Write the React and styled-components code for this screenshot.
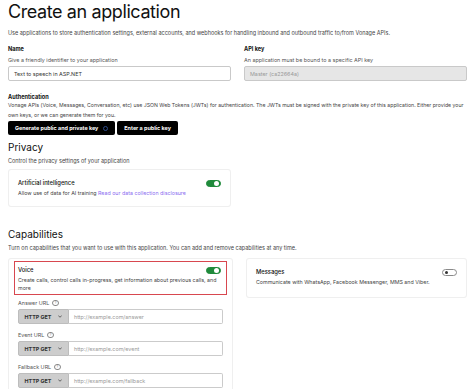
import styled, { createGlobalStyle } from 'styled-components';

const GlobalStyle = createGlobalStyle`
  html, body {
    margin: 0;
    padding: 0;
    background: #ffffff;
  }
  body {
    font-family: Inter, "Noto Sans", "Liberation Sans", sans-serif;
    color: #1a1a1a;
  }
`;

const Page = styled.div`
  width: 474px;
  height: 389px;
  overflow: hidden;
  padding: 0 7px 0 8px;
  box-sizing: border-box;
`;

const Title = styled.h1`
  margin: 1px 0 0;
  font-size: 18px;
  line-height: 22px;
  font-weight: 400;
  letter-spacing: -0.4px;
  color: #111;
`;

const Lead = styled.p`
  margin: ${(p) => p.$mt || 0}px 0 0;
  font-size: 5.5px;
  line-height: 8px;
  color: #444;
`;

const Columns = styled.div`
  display: grid;
  grid-template-columns: 1fr 1fr;
  column-gap: 13px;
  margin-top: ${(p) => p.$mt || 0}px;
  align-items: start;
`;

const Field = styled.div`
  display: flex;
  flex-direction: column;
`;

const Label = styled.div`
  font-size: 5.6px;
  line-height: 8px;
  font-weight: 700;
  color: #111;
`;

const Hint = styled.div`
  margin-top: 3px;
  font-size: 5.4px;
  line-height: 8px;
  color: #555;
`;

const TextInput = styled.div`
  margin-top: 2px;
  height: 15px;
  box-sizing: border-box;
  border: 1px solid #c9c9c9;
  border-radius: 2px;
  background: ${(p) => (p.$disabled ? '#e6e6e6' : '#fff')};
  color: ${(p) => (p.$disabled ? '#9a9a9a' : '#333')};
  font-size: 5.4px;
  display: flex;
  align-items: center;
  padding: 0 5px;
`;

const Section = styled.div`
  margin-top: ${(p) => p.$mt || 0}px;
`;

const Desc = styled.p`
  margin: 0;
  font-size: 5.2px;
  line-height: 9.5px;
  color: #444;
`;

const ButtonRow = styled.div`
  display: flex;
  gap: 2px;
  margin-top: 1px;
`;

const DarkButton = styled.button`
  height: 14px;
  padding: 0 ${(p) => p.$px || 6}px;
  background: #000;
  color: #fff;
  border: none;
  border-radius: 2px;
  font-family: inherit;
  font-size: 5.4px;
  font-weight: 700;
  display: flex;
  align-items: center;
  gap: 5px;
`;

const InfoDot = styled.span`
  width: 5px;
  height: 5px;
  border-radius: 50%;
  border: 1px solid #2d4c8c;
  box-sizing: border-box;
`;

const Heading = styled.h2`
  margin: ${(p) => p.$mt || 0}px 0 0;
  font-size: 10px;
  line-height: 12px;
  font-weight: 400;
  color: #111;
`;

const Card = styled.div`
  box-sizing: border-box;
  border: 1px solid #efefef;
  border-radius: 3px;
  background: #fff;
  padding: ${(p) => p.$pad || '8px 9px'};
  box-shadow: 0 0 1px rgba(0, 0, 0, 0.03);
`;

const CardHead = styled.div`
  display: flex;
  align-items: center;
  justify-content: space-between;
`;

const CardTitle = styled.div`
  font-size: 5.8px;
  line-height: 8px;
  font-weight: 500;
  color: #111;
`;

const CardText = styled.div`
  margin-top: 2px;
  font-size: 5.3px;
  line-height: 8px;
  color: #444;
`;

const Link = styled.a`
  color: #8a6cf0;
  text-decoration: none;
`;

const Toggle = styled.span`
  width: 15px;
  height: 7px;
  border-radius: 4px;
  box-sizing: border-box;
  background: ${(p) => (p.$on ? '#1f8a3b' : '#fff')};
  border: 1px solid ${(p) => (p.$on ? '#1f8a3b' : '#8a8a8a')};
  display: flex;
  align-items: center;
  justify-content: ${(p) => (p.$on ? 'flex-end' : 'flex-start')};
  padding: 0 1px;
  margin-right: 1px;

  &::after {
    content: '';
    width: ${(p) => (p.$on ? 5 : 3)}px;
    height: ${(p) => (p.$on ? 5 : 3)}px;
    margin: ${(p) => (p.$on ? 0 : '0 1px')};
    border-radius: 50%;
    background: ${(p) => (p.$on ? '#fff' : '#333')};
  }
`;

const Highlight = styled.div`
  margin: -1px -4px 0;
  padding: 4px 4px 2px 3px;
  border: 1.5px solid #d8474f;
`;

const UrlLabel = styled.div`
  margin-top: ${(p) => p.$mt || 0}px;
  display: flex;
  align-items: center;
  gap: 3px;
  font-size: 5.4px;
  line-height: 8px;
  color: #555;
`;

const Help = styled.span`
  width: 4.5px;
  height: 4.5px;
  border-radius: 50%;
  border: 0.6px solid #888;
  font-size: 3.4px;
  line-height: 4.5px;
  text-align: center;
  color: #777;
`;

const UrlRow = styled.div`
  margin-top: 2px;
  display: flex;
  height: 15px;
  width: 205px;
`;

const Method = styled.div`
  width: 51px;
  box-sizing: border-box;
  background: #cdcdcd;
  border: 1px solid #bdbdbd;
  border-radius: 2px 0 0 2px;
  display: flex;
  align-items: center;
  justify-content: center;
  gap: 7px;
  font-size: 5.4px;
  font-weight: 700;
  color: #333;
`;

const UrlInput = styled.div`
  flex: 1;
  box-sizing: border-box;
  border: 1px solid #cbcbcb;
  border-left: none;
  border-radius: 0 2px 2px 0;
  display: flex;
  align-items: center;
  padding: 0 5px;
  font-size: 5.4px;
  color: #9a9a9a;
`;

const Chevron = () => (
  <svg width="4" height="3" viewBox="0 0 8 5" fill="none">
    <path d="M1 1l3 3 3-3" stroke="#333" strokeWidth="1.4" strokeLinecap="round" strokeLinejoin="round" />
  </svg>
);

const urls = [
  { label: 'Answer URL', placeholder: 'http://example.com/answer', mt: 4 },
  { label: 'Event URL', placeholder: 'http://example.com/event', mt: 7 },
  { label: 'Fallback URL', placeholder: 'http://example.com/fallback', mt: 7 },
];

const App = () => {
  return (
    <Page>
      <GlobalStyle />
      <Title>Create an application</Title>
      <Lead $mt={6}>
        Use applications to store authentication settings, external accounts, and webhooks for handling inbound and outbound traffic to/from Vonage APIs.
      </Lead>

      <Columns $mt={8}>
        <Field>
          <Label>Name</Label>
          <Hint>Give a friendly identifier to your application</Hint>
          <TextInput>Text to speech in ASP.NET</TextInput>
        </Field>
        <Field>
          <Label>API key</Label>
          <Hint>An application must be bound to a specific API key</Hint>
          <TextInput $disabled>Master (ca22664a)</TextInput>
        </Field>
      </Columns>

      <Section $mt={12}>
        <Label>Authentication</Label>
        <Desc>
          Vonage APIs (Voice, Messages, Conversation, etc) use JSON Web Tokens (JWTs) for authentication. The JWTs must be signed with the private key of this application. Either provide your own keys, or we can generate them for you.
        </Desc>
        <ButtonRow>
          <DarkButton $px={7}>
            Generate public and private key
            <InfoDot />
          </DarkButton>
          <DarkButton $px={7}>Enter a public key</DarkButton>
        </ButtonRow>
      </Section>

      <Heading $mt={6}>Privacy</Heading>
      <Lead $mt={4}>Control the privacy settings of your application</Lead>
      <Columns $mt={4}>
        <Card $pad="9px 8px 9px 9px">
          <CardHead>
            <CardTitle>Artificial intelligence</CardTitle>
            <Toggle $on />
          </CardHead>
          <CardText>
            Allow use of data for AI training <Link href="#">Read our data collection disclosure</Link>
          </CardText>
        </Card>
      </Columns>

      <Heading $mt={21}>Capabilities</Heading>
      <Lead $mt={4}>
        Turn on capabilities that you want to use with this application. You can add and remove capabilities at any time.
      </Lead>
      <Columns $mt={6}>
        <Card $pad="3px 9px 9px 9px">
          <Highlight>
            <CardHead>
              <CardTitle>Voice</CardTitle>
              <Toggle $on />
            </CardHead>
            <CardText>
              Create calls, control calls in-progress, get information about previous calls, and more
            </CardText>
          </Highlight>
          {urls.map((u) => (
            <div key={u.label}>
              <UrlLabel $mt={u.mt}>
                {u.label}
                <Help>?</Help>
              </UrlLabel>
              <UrlRow>
                <Method>
                  HTTP GET
                  <Chevron />
                </Method>
                <UrlInput>{u.placeholder}</UrlInput>
              </UrlRow>
            </div>
          ))}
        </Card>
        <Card $pad="9px 8px 11px 9px">
          <CardHead>
            <CardTitle>Messages</CardTitle>
            <Toggle />
          </CardHead>
          <CardText>Communicate with WhatsApp, Facebook Messenger, MMS and Viber.</CardText>
        </Card>
      </Columns>
    </Page>
  );
};

export default App;
